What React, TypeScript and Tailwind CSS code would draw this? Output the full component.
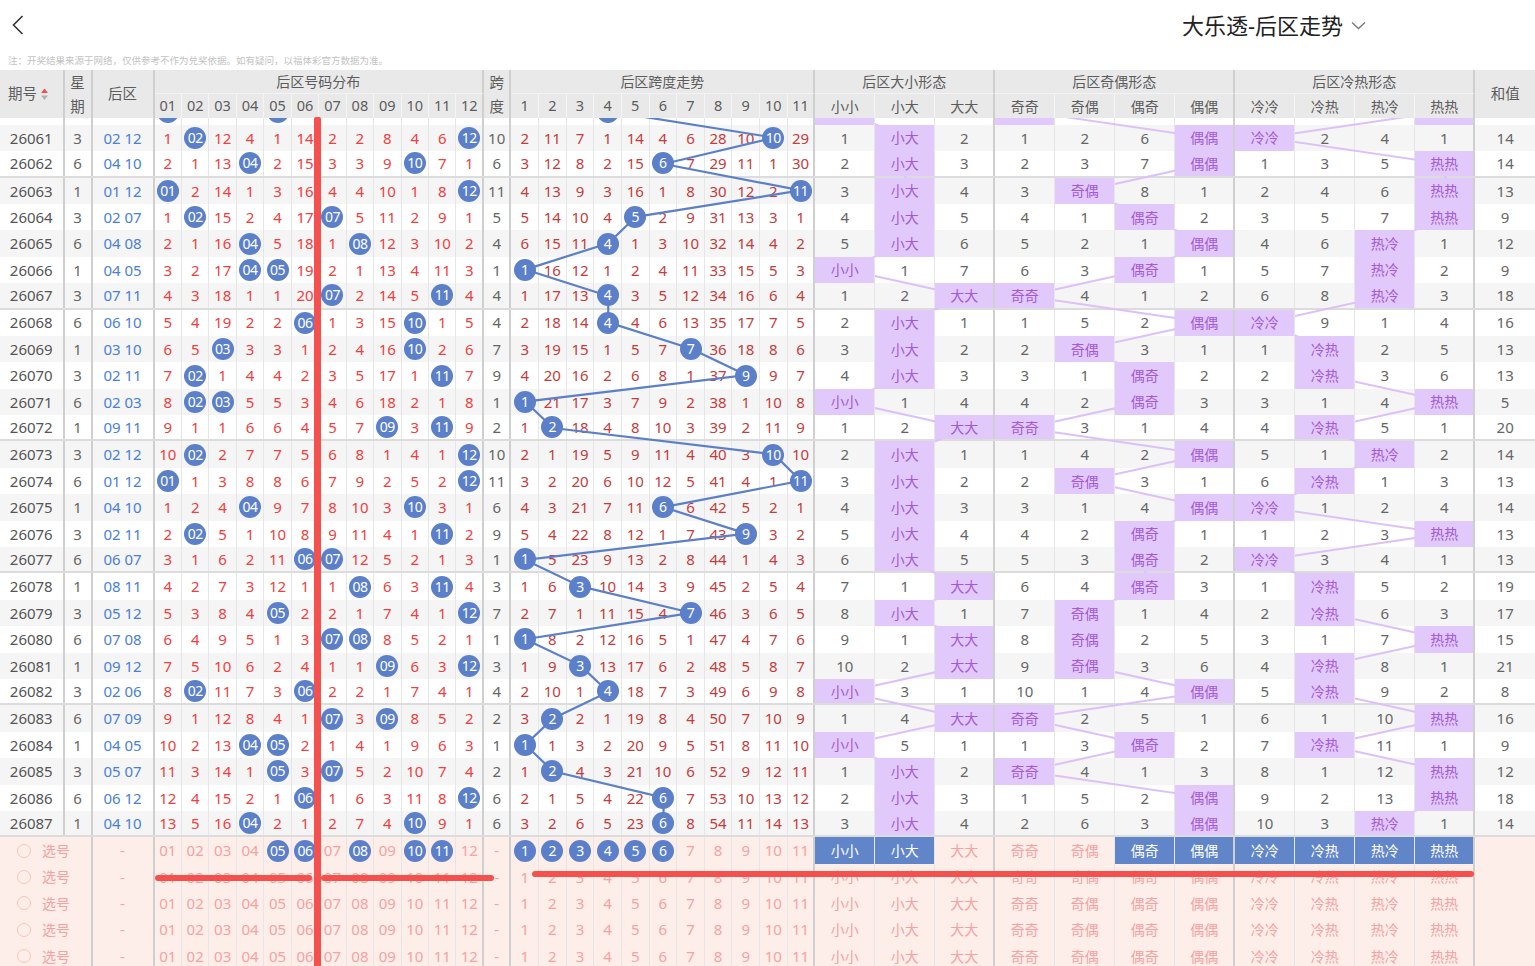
import React from "react";

const GRID =
  "grid grid-cols-[64.5px_28px_62px_repeat(12,27.46px)_27.5px_repeat(11,27.64px)_repeat(11,60px)_1fr]";
const THICK = new Set([0, 1, 2, 14, 15, 26, 29, 33, 37]);
const bd = (i: number) =>
  THICK.has(i) ? "border-r-2 border-r-[#cfcfcf]" : i === 38 ? "" : "border-r border-r-[#e6e6e6]";
const hbd = (i: number) =>
  THICK.has(i) ? "border-r-2 border-r-[#cfcfcf]" : i === 38 ? "" : "border-r border-r-[#f5f5f5]";

const DX = ["小小", "小大", "大大"];
const OE = ["奇奇", "奇偶", "偶奇", "偶偶"];
const CH = ["冷冷", "冷热", "热冷", "热热"];

const RAW = `26060 1 01 05 | 0 5 11 3 0 13 1 1 7 3 5 3 | 1 10 6 0 13 3 5 27 9 8 28 | 0 3 1 | 0 1 5 2 | 5 1 3 0
26061 3 02 12 | 1 0 12 4 1 14 2 2 8 4 6 0 | 2 11 7 1 14 4 6 28 10 0 29 | 1 0 2 | 1 2 6 0 | 0 2 4 1
26062 6 04 10 | 2 1 13 0 2 15 3 3 9 0 7 1 | 3 12 8 2 15 0 7 29 11 1 30 | 2 0 3 | 2 3 7 0 | 1 3 5 0
26063 1 01 12 | 0 2 14 1 3 16 4 4 10 1 8 0 | 4 13 9 3 16 1 8 30 12 2 0 | 3 0 4 | 3 0 8 1 | 2 4 6 0
26064 3 02 07 | 1 0 15 2 4 17 0 5 11 2 9 1 | 5 14 10 4 0 2 9 31 13 3 1 | 4 0 5 | 4 1 0 2 | 3 5 7 0
26065 6 04 08 | 2 1 16 0 5 18 1 0 12 3 10 2 | 6 15 11 0 1 3 10 32 14 4 2 | 5 0 6 | 5 2 1 0 | 4 6 0 1
26066 1 04 05 | 3 2 17 0 0 19 2 1 13 4 11 3 | 0 16 12 1 2 4 11 33 15 5 3 | 0 1 7 | 6 3 0 1 | 5 7 0 2
26067 3 07 11 | 4 3 18 1 1 20 0 2 14 5 0 4 | 1 17 13 0 3 5 12 34 16 6 4 | 1 2 0 | 0 4 1 2 | 6 8 0 3
26068 6 06 10 | 5 4 19 2 2 0 1 3 15 0 1 5 | 2 18 14 0 4 6 13 35 17 7 5 | 2 0 1 | 1 5 2 0 | 0 9 1 4
26069 1 03 10 | 6 5 0 3 3 1 2 4 16 0 2 6 | 3 19 15 1 5 7 0 36 18 8 6 | 3 0 2 | 2 0 3 1 | 1 0 2 5
26070 3 02 11 | 7 0 1 4 4 2 3 5 17 1 0 7 | 4 20 16 2 6 8 1 37 0 9 7 | 4 0 3 | 3 1 0 2 | 2 0 3 6
26071 6 02 03 | 8 0 0 5 5 3 4 6 18 2 1 8 | 0 21 17 3 7 9 2 38 1 10 8 | 0 1 4 | 4 2 0 3 | 3 1 4 0
26072 1 09 11 | 9 1 1 6 6 4 5 7 0 3 0 9 | 1 0 18 4 8 10 3 39 2 11 9 | 1 2 0 | 0 3 1 4 | 4 0 5 1
26073 3 02 12 | 10 0 2 7 7 5 6 8 1 4 1 0 | 2 1 19 5 9 11 4 40 3 0 10 | 2 0 1 | 1 4 2 0 | 5 1 0 2
26074 6 01 12 | 0 1 3 8 8 6 7 9 2 5 2 0 | 3 2 20 6 10 12 5 41 4 1 0 | 3 0 2 | 2 0 3 1 | 6 0 1 3
26075 1 04 10 | 1 2 4 0 9 7 8 10 3 0 3 1 | 4 3 21 7 11 0 6 42 5 2 1 | 4 0 3 | 3 1 4 0 | 0 1 2 4
26076 3 02 11 | 2 0 5 1 10 8 9 11 4 1 0 2 | 5 4 22 8 12 1 7 43 0 3 2 | 5 0 4 | 4 2 0 1 | 1 2 3 0
26077 6 06 07 | 3 1 6 2 11 0 0 12 5 2 1 3 | 0 5 23 9 13 2 8 44 1 4 3 | 6 0 5 | 5 3 0 2 | 0 3 4 1
26078 1 08 11 | 4 2 7 3 12 1 1 0 6 3 0 4 | 1 6 0 10 14 3 9 45 2 5 4 | 7 1 0 | 6 4 0 3 | 1 0 5 2
26079 3 05 12 | 5 3 8 4 0 2 2 1 7 4 1 0 | 2 7 1 11 15 4 0 46 3 6 5 | 8 0 1 | 7 0 1 4 | 2 0 6 3
26080 6 07 08 | 6 4 9 5 1 3 0 0 8 5 2 1 | 0 8 2 12 16 5 1 47 4 7 6 | 9 1 0 | 8 0 2 5 | 3 1 7 0
26081 1 09 12 | 7 5 10 6 2 4 1 1 0 6 3 0 | 1 9 0 13 17 6 2 48 5 8 7 | 10 2 0 | 9 0 3 6 | 4 0 8 1
26082 3 02 06 | 8 0 11 7 3 0 2 2 1 7 4 1 | 2 10 1 0 18 7 3 49 6 9 8 | 0 3 1 | 10 1 4 0 | 5 0 9 2
26083 6 07 09 | 9 1 12 8 4 1 0 3 0 8 5 2 | 3 0 2 1 19 8 4 50 7 10 9 | 1 4 0 | 0 2 5 1 | 6 1 10 0
26084 1 04 05 | 10 2 13 0 0 2 1 4 1 9 6 3 | 0 1 3 2 20 9 5 51 8 11 10 | 0 5 1 | 1 3 0 2 | 7 0 11 1
26085 3 05 07 | 11 3 14 1 0 3 0 5 2 10 7 4 | 1 0 4 3 21 10 6 52 9 12 11 | 1 0 2 | 0 4 1 3 | 8 1 12 0
26086 6 06 12 | 12 4 15 2 1 0 1 6 3 11 8 0 | 2 1 5 4 22 0 7 53 10 13 12 | 2 0 3 | 1 5 2 0 | 9 2 13 0
26087 1 04 10 | 13 5 16 0 2 1 2 7 4 0 9 1 | 3 2 6 5 23 0 8 54 11 14 13 | 3 0 4 | 2 6 3 0 | 10 3 0 1`;

type Row = {
  id: number;
  wd: number;
  a: number;
  b: number;
  dist: number[];
  span: number[];
  dx: number[];
  oe: number[];
  ch: number[];
};

const ROWS: Row[] = RAW.trim()
  .split("\n")
  .map((line) => {
    const [h, d, s, x, o, c] = line
      .split("|")
      .map((p) => p.trim().split(/\s+/).map(Number));
    return { id: h[0], wd: h[1], a: h[2], b: h[3], dist: d, span: s, dx: x, oe: o, ch: c };
  });

const pad = (n: number) => (n < 10 ? "0" + n : String(n));
const RH = 26.4;
const spanX = (k: number) => 511.52 + 27.64 * k + 13.82 - (k === 10 ? 1 : 0);
const typeX = (k: number) => 815.56 + 60 * k + 30;
const rowY = (i: number) => i * RH + RH / 2;

const BASE = "flex items-center justify-center";
const BALL =
  "relative z-10 w-[22px] h-[22px] rounded-full bg-[#5b80c9] text-white flex items-center justify-center text-[14px] tracking-[-0.5px] leading-none";

function DataRow({ r, i }: { r: Row; i: number }) {
  const hide = i === 0; // row scrolled under the header: only its lower edge shows
  const t = (v: React.ReactNode) => (hide ? null : v);
  const bg = i % 2 === 1 ? "bg-[#f5f5f5]" : "bg-white";
  const sep = (r.id - 26062) % 5 === 0 ? "border-b-2 border-b-[#dcdcdc]" : "";
  const cells: React.ReactNode[] = [];
  cells.push(
    <div key="id" className={`${BASE} ${bd(0)} text-[#555555]`}>
      {t(r.id)}
    </div>
  );
  cells.push(
    <div key="wd" className={`${BASE} ${bd(1)} text-[#666666]`}>
      {t(r.wd)}
    </div>
  );
  cells.push(
    <div key="hq" className={`${BASE} ${bd(2)} text-[#4a7fd6]`}>
      {t(
        <>
          {pad(r.a)}&nbsp;{pad(r.b)}
        </>
      )}
    </div>
  );
  r.dist.forEach((v, k) => {
    const ci = 3 + k;
    cells.push(
      <div key={"d" + k} className={`${BASE} ${bd(ci)} text-[#ef4040]`}>
        {v === 0 ? <span className={BALL}>{t(pad(k + 1))}</span> : t(v)}
      </div>
    );
  });
  cells.push(
    <div key="kd" className={`${BASE} ${bd(15)} text-[#666666]`}>
      {t(r.b - r.a)}
    </div>
  );
  r.span.forEach((v, k) => {
    const ci = 16 + k;
    cells.push(
      <div key={"s" + k} className={`${BASE} ${bd(ci)} text-[#c43c3c]`}>
        {v === 0 ? <span className={BALL}>{t(k + 1)}</span> : t(v)}
      </div>
    );
  });
  const types: [number, string][] = [
    ...r.dx.map((v, k) => [v, DX[k]] as [number, string]),
    ...r.oe.map((v, k) => [v, OE[k]] as [number, string]),
    ...r.ch.map((v, k) => [v, CH[k]] as [number, string]),
  ];
  types.forEach(([v, label], k) => {
    const ci = 27 + k;
    cells.push(
      v === 0 ? (
        <div
          key={"t" + k}
          className={`${BASE} ${bd(ci)} relative z-10 bg-[#e2c9fb] text-[#a25ad8] text-[14px]`}
        >
          {t(label)}
        </div>
      ) : (
        <div key={"t" + k} className={`${BASE} ${bd(ci)} text-[#666666]`}>
          {t(v)}
        </div>
      )
    );
  });
  cells.push(
    <div key="sum" className={`${BASE} text-[#666666]`}>
      {t(r.a + r.b)}
    </div>
  );
  return <div className={`${GRID} h-[26.4px] ${bg} ${sep} text-[15px]`}>{cells}</div>;
}

const SEL_DIST = new Set([5, 6, 8, 10, 11]);
const SEL_SPAN = new Set([1, 2, 3, 4, 5, 6]);
const SEL_TYPE = new Set([0, 1, 5, 6, 7, 8, 9, 10]);

function PickRow({ k }: { k: number }) {
  const sel = k === 0;
  const pink = "text-[#f6a2a2]";
  const cells: React.ReactNode[] = [];
  cells.push(
    <div key="p" className={`col-span-2 flex items-center pl-[17px] gap-[11px] ${bd(1)}`}>
      <span className="w-[14px] h-[14px] rounded-full border border-[#f8c6bc]" />
      <span className={`text-[14px] ${pink}`}>选号</span>
    </div>
  );
  cells.push(
    <div key="hq" className={`${BASE} ${bd(2)} ${pink}`}>
      -
    </div>
  );
  for (let n = 1; n <= 12; n++) {
    const ci = 2 + n;
    cells.push(
      <div key={"d" + n} className={`${BASE} ${bd(ci)} ${pink}`}>
        {sel && SEL_DIST.has(n) ? <span className={BALL}>{pad(n)}</span> : pad(n)}
      </div>
    );
  }
  cells.push(
    <div key="kd" className={`${BASE} ${bd(15)} ${pink}`}>
      -
    </div>
  );
  for (let n = 1; n <= 11; n++) {
    const ci = 15 + n;
    cells.push(
      <div key={"s" + n} className={`${BASE} ${bd(ci)} ${pink}`}>
        {sel && SEL_SPAN.has(n) ? <span className={BALL}>{n}</span> : n}
      </div>
    );
  }
  const labels = [...DX, ...OE, ...CH];
  labels.forEach((label, t) => {
    const ci = 27 + t;
    const on = sel && SEL_TYPE.has(t);
    cells.push(
      <div
        key={"t" + t}
        className={`${BASE} ${bd(ci)} text-[14px] ${
          on ? "relative z-10 bg-[#6185c9] text-white" : pink
        }`}
      >
        {label}
      </div>
    );
  });
  cells.push(<div key="sum" />);
  return <div className={`${GRID} h-[26.4px] bg-[#fdeee9] text-[15px]`}>{cells}</div>;
}

function SortIcon() {
  return (
    <svg width="7" height="13" viewBox="0 0 7 13">
      <polygon points="3.5,0.5 7,5 0,5" fill="#ef4f4f" />
      <polygon points="0,7.5 7,7.5 3.5,12" fill="#b0b0b0" />
    </svg>
  );
}

function Header() {
  const sub: React.ReactNode[] = [];
  for (let n = 1; n <= 12; n++)
    sub.push(
      <div key={"h" + n} className={`${BASE} ${hbd(2 + n)}`}>
        {pad(n)}
      </div>
    );
  for (let n = 1; n <= 11; n++)
    sub.push(
      <div key={"k" + n} className={`${BASE} ${hbd(15 + n)}`}>
        {n}
      </div>
    );
  [...DX, ...OE, ...CH].forEach((l, t) =>
    sub.push(
      <div key={"t" + t} className={`${BASE} ${hbd(27 + t)} text-[14px]`}>
        {l}
      </div>
    )
  );
  const grp =
    "flex items-center justify-center border-b border-b-[#f3f3f3] border-r-2 border-r-[#cfcfcf] text-[14px]";
  return (
    <div className={`${GRID} grid-rows-[24px_24px] h-[48px] bg-[#e9e9e9] text-[#5c5c5c] text-[14.5px]`}>
      <div className={`row-span-2 flex items-center pl-[8px] gap-[4px] ${hbd(0)}`}>
        <span>期号</span>
        <SortIcon />
      </div>
      <div className={`row-span-2 flex flex-col items-center justify-center leading-[24px] ${hbd(1)}`}>
        <span>星</span>
        <span>期</span>
      </div>
      <div className={`row-span-2 ${BASE} ${hbd(2)}`}>后区</div>
      <div className={`col-span-12 ${grp}`}>后区号码分布</div>
      <div className={`row-span-2 flex flex-col items-center justify-center leading-[24px] ${hbd(15)}`}>
        <span>跨</span>
        <span>度</span>
      </div>
      <div className={`col-span-11 ${grp}`}>后区跨度走势</div>
      <div className={`col-span-3 ${grp}`}>后区大小形态</div>
      <div className={`col-span-4 ${grp}`}>后区奇偶形态</div>
      <div className={`col-span-4 ${grp}`}>后区冷热形态</div>
      <div className={`row-span-2 ${BASE}`}>和值</div>
      {sub}
    </div>
  );
}

function Lines() {
  const h = (ROWS.length + 5) * RH;
  const spanPts = ROWS.map((r, i) => `${spanX(r.span.indexOf(0))},${rowY(i)}`).join(" ");
  const dxPts = ROWS.map((r, i) => `${typeX(r.dx.indexOf(0))},${rowY(i)}`).join(" ");
  const oePts = ROWS.map((r, i) => `${typeX(3 + r.oe.indexOf(0))},${rowY(i)}`).join(" ");
  const chPts = ROWS.map((r, i) => `${typeX(7 + r.ch.indexOf(0))},${rowY(i)}`).join(" ");
  return (
    <svg className="absolute left-0 top-0 pointer-events-none" width={1535} height={h}>
      <polyline points={dxPts} fill="none" stroke="#dcc1f8" strokeWidth="2" />
      <polyline points={oePts} fill="none" stroke="#dcc1f8" strokeWidth="2" />
      <polyline points={chPts} fill="none" stroke="#dcc1f8" strokeWidth="2" />
      <polyline points={spanPts} fill="none" stroke="#5b80c9" strokeWidth="2.2" />
    </svg>
  );
}

export default function App() {
  return (
    <div className="relative w-[1535px] h-[966px] overflow-hidden bg-white font-['Noto_Sans','Noto_Sans_CJK_SC',sans-serif]">
      <div className="h-[50px] flex items-center">
        <svg className="ml-[12px]" width="12" height="20" viewBox="0 0 12 20">
          <path d="M10.5 1 L1.5 10 L10.5 19" stroke="#333333" strokeWidth="1.6" fill="none" />
        </svg>
        <div className="ml-auto mr-[169px] flex items-center gap-[8px]">
          <span className="text-[22px] leading-none text-[#222222]">大乐透-后区走势</span>
          <svg width="15" height="9" viewBox="0 0 15 9">
            <path d="M1 1.5 L7.5 7.5 L14 1.5" stroke="#777777" strokeWidth="1.3" fill="none" />
          </svg>
        </div>
      </div>
      <div className="h-[20px] flex items-center pl-[8px] text-[9.5px] text-[#c3c3c3] font-['Noto_Sans_CJK_SC',sans-serif]">
        注：开奖结果来源于网络，仅供参考不作为兑奖依据。如有疑问，以福体彩官方数据为准。
      </div>
      <Header />
      <div className="h-[848px] overflow-hidden">
        <div className="relative mt-[-19.6px]">
          {ROWS.map((r, i) => (
            <DataRow key={r.id} r={r} i={i} />
          ))}
          {[0, 1, 2, 3, 4].map((k) => (
            <PickRow key={k} k={k} />
          ))}
          <Lines />
        </div>
      </div>
      <div className="absolute z-20 left-[314px] top-[117px] w-[7px] h-[849px] bg-[#f4504e] rounded-t-[2px]" />
      <div className="absolute z-20 left-[155px] top-[875px] w-[157px] h-[6px] bg-[#f4504e] rounded-full" />
      <div className="absolute z-20 left-[321px] top-[875px] w-[173px] h-[6px] bg-[#f4504e] rounded-full" />
      <div className="absolute z-20 left-[532px] top-[871px] w-[942px] h-[6px] bg-[#f4504e] rounded-full" />
    </div>
  );
}
